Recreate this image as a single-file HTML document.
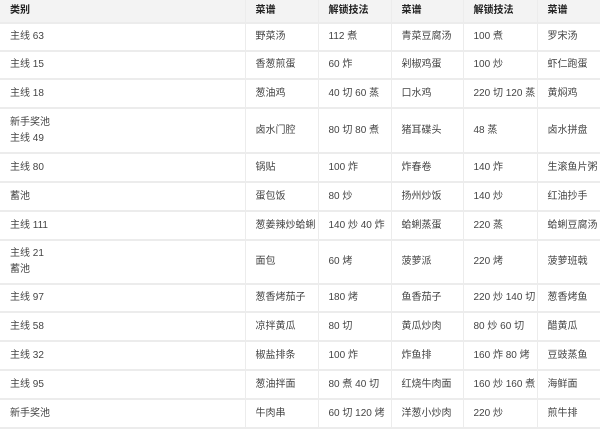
<!DOCTYPE html>
<html><head><meta charset="utf-8"><style>
body{margin:0;width:600px;height:429px;overflow:hidden;background:#fff;font-family:"Liberation Sans","Noto Sans CJK SC",sans-serif;font-size:10px;color:#444}
table{border-collapse:collapse;table-layout:fixed;position:absolute;left:0;top:0;width:620px}
td,th{border:1px solid #ececec;border-width:2px 1px;padding:0 0 0 10px;text-align:left;vertical-align:middle;line-height:16px}
th{background:#f3f3f3;font-weight:bold;color:#222;height:22px;border-top:none}
tr>*:first-child{border-left:none}
</style></head><body>
<table>
<colgroup><col style="width:245px"><col style="width:73px"><col style="width:73px"><col style="width:72px"><col style="width:74px"><col style="width:83px"></colgroup>
<tr><th>类别</th><th>菜谱</th><th>解锁技法</th><th>菜谱</th><th>解锁技法</th><th>菜谱</th></tr>
<tr style="height:28px"><td>主线 63</td><td>野菜汤</td><td>112 煮</td><td>青菜豆腐汤</td><td>100 煮</td><td>罗宋汤</td></tr>
<tr style="height:28px"><td>主线 15</td><td>香葱煎蛋</td><td>60 炸</td><td>剁椒鸡蛋</td><td>100 炒</td><td>虾仁跑蛋</td></tr>
<tr style="height:29px"><td>主线 18</td><td>葱油鸡</td><td>40 切 60 蒸</td><td>口水鸡</td><td>220 切 120 蒸</td><td>黄焖鸡</td></tr>
<tr style="height:45px"><td>新手奖池<br>主线 49</td><td>卤水门腔</td><td>80 切 80 煮</td><td>猪耳碟头</td><td>48 蒸</td><td>卤水拼盘</td></tr>
<tr style="height:29px"><td>主线 80</td><td>锅贴</td><td>100 炸</td><td>炸春卷</td><td>140 炸</td><td>生滚鱼片粥</td></tr>
<tr style="height:29px"><td>蓄池</td><td>蛋包饭</td><td>80 炒</td><td>扬州炒饭</td><td>140 炒</td><td>红油抄手</td></tr>
<tr style="height:29px"><td>主线 111</td><td>葱姜辣炒蛤蜊</td><td>140 炒 40 炸</td><td>蛤蜊蒸蛋</td><td>220 蒸</td><td>蛤蜊豆腐汤</td></tr>
<tr style="height:44px"><td>主线 21<br>蓄池</td><td>面包</td><td>60 烤</td><td>菠萝派</td><td>220 烤</td><td>菠萝班戟</td></tr>
<tr style="height:28px"><td>主线 97</td><td>葱香烤茄子</td><td>180 烤</td><td>鱼香茄子</td><td>220 炒 140 切</td><td>葱香烤鱼</td></tr>
<tr style="height:29px"><td>主线 58</td><td>凉拌黄瓜</td><td>80 切</td><td>黄瓜炒肉</td><td>80 炒 60 切</td><td>醋黄瓜</td></tr>
<tr style="height:29px"><td>主线 32</td><td>椒盐排条</td><td>100 炸</td><td>炸鱼排</td><td>160 炸 80 烤</td><td>豆豉蒸鱼</td></tr>
<tr style="height:29px"><td>主线 95</td><td>葱油拌面</td><td>80 煮 40 切</td><td>红烧牛肉面</td><td>160 炒 160 煮</td><td>海鲜面</td></tr>
<tr style="height:29px"><td>新手奖池</td><td>牛肉串</td><td>60 切 120 烤</td><td>洋葱小炒肉</td><td>220 炒</td><td>煎牛排</td></tr>
</table>
</body></html>
